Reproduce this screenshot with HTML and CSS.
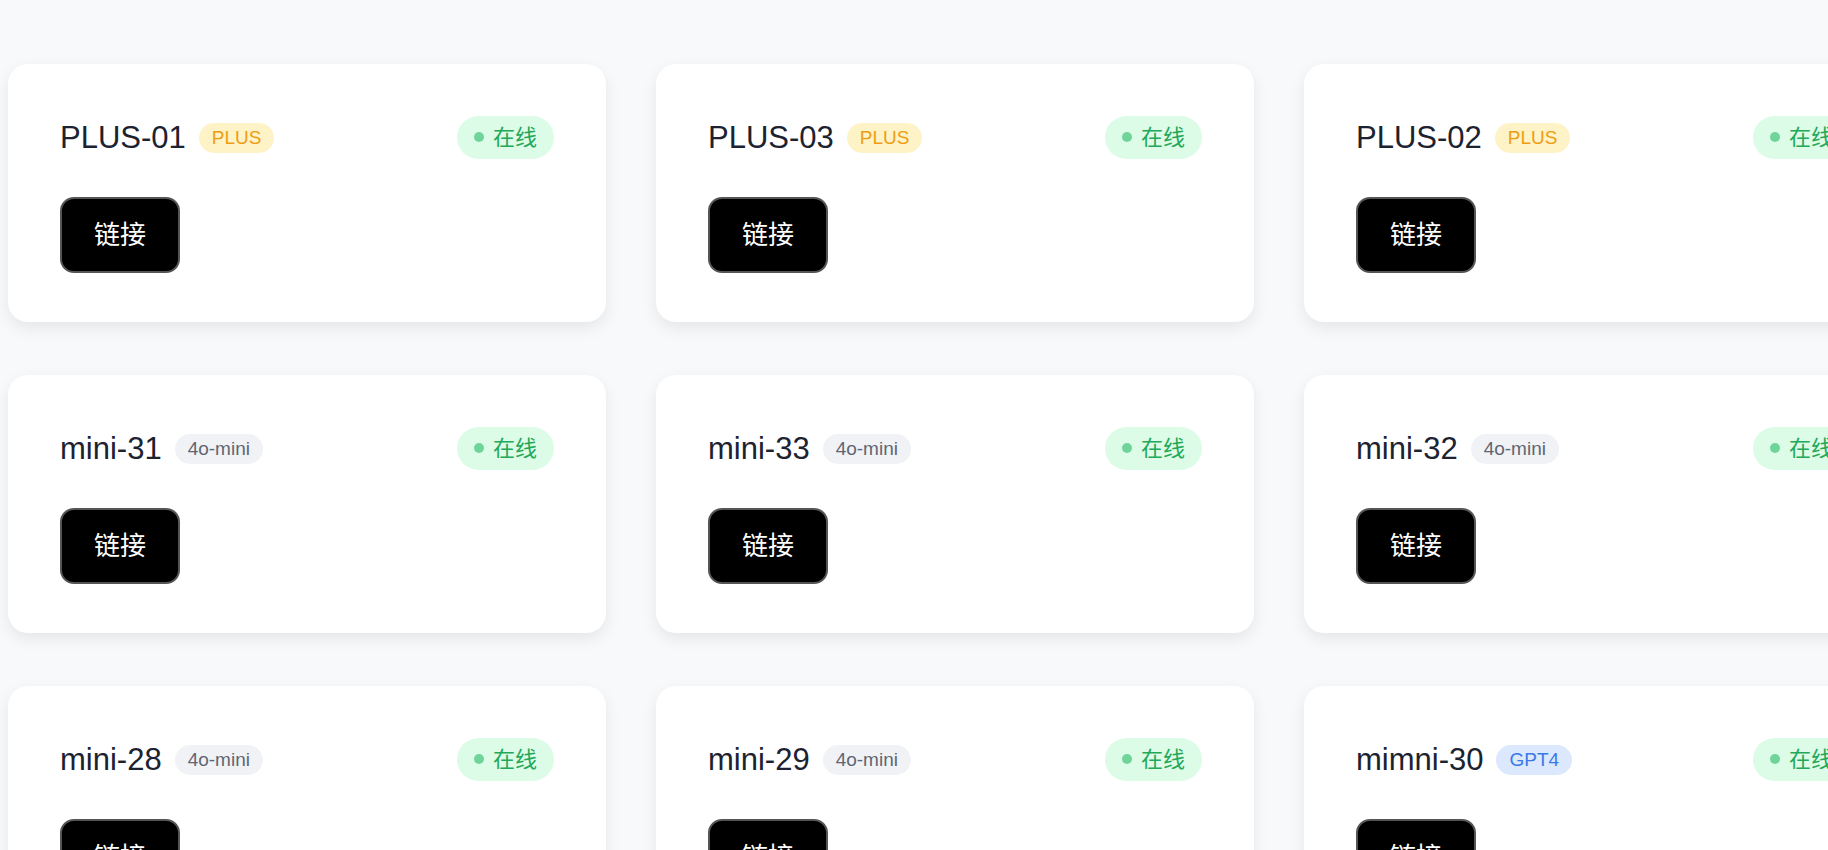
FILE: index.html
```html
<!DOCTYPE html>
<html lang="zh-CN">
<head>
  <meta charset="UTF-8">
  <meta name="viewport" content="width=device-width, initial-scale=1.0">
  <title>节点列表</title>
  <link rel="stylesheet" href="styles.css">
</head>
<body>

<div class="grid">
  <div class="card">
    <div class="card-head">
      <div class="name">PLUS-01 <span class="tag tag-plus">PLUS</span></div>
      <span class="status"><i class="dot"></i><span class="status-text">在线</span></span>
    </div>
    <button class="link-btn">链接</button>
  </div>
  <div class="card">
    <div class="card-head">
      <div class="name">PLUS-03 <span class="tag tag-plus">PLUS</span></div>
      <span class="status"><i class="dot"></i><span class="status-text">在线</span></span>
    </div>
    <button class="link-btn">链接</button>
  </div>
  <div class="card">
    <div class="card-head">
      <div class="name">PLUS-02 <span class="tag tag-plus">PLUS</span></div>
      <span class="status"><i class="dot"></i><span class="status-text">在线</span></span>
    </div>
    <button class="link-btn">链接</button>
  </div>

  <div class="card">
    <div class="card-head">
      <div class="name">mini-31 <span class="tag tag-mini">4o-mini</span></div>
      <span class="status"><i class="dot"></i><span class="status-text">在线</span></span>
    </div>
    <button class="link-btn">链接</button>
  </div>
  <div class="card">
    <div class="card-head">
      <div class="name">mini-33 <span class="tag tag-mini">4o-mini</span></div>
      <span class="status"><i class="dot"></i><span class="status-text">在线</span></span>
    </div>
    <button class="link-btn">链接</button>
  </div>
  <div class="card">
    <div class="card-head">
      <div class="name">mini-32 <span class="tag tag-mini">4o-mini</span></div>
      <span class="status"><i class="dot"></i><span class="status-text">在线</span></span>
    </div>
    <button class="link-btn">链接</button>
  </div>

  <div class="card">
    <div class="card-head">
      <div class="name">mini-28 <span class="tag tag-mini">4o-mini</span></div>
      <span class="status"><i class="dot"></i><span class="status-text">在线</span></span>
    </div>
    <button class="link-btn">链接</button>
  </div>
  <div class="card">
    <div class="card-head">
      <div class="name">mini-29 <span class="tag tag-mini">4o-mini</span></div>
      <span class="status"><i class="dot"></i><span class="status-text">在线</span></span>
    </div>
    <button class="link-btn">链接</button>
  </div>
  <div class="card">
    <div class="card-head">
      <div class="name">mimni-30 <span class="tag tag-gpt4">GPT4</span></div>
      <span class="status"><i class="dot"></i><span class="status-text">在线</span></span>
    </div>
    <button class="link-btn">链接</button>
  </div>
</div>

</body>
</html>
```

FILE: styles.css
```css
html, body {
  overflow: hidden;
}

body {
  font-family: "Liberation Sans", "Noto Sans CJK SC", sans-serif;
  background-color: #f8f9fb;
  margin: 0;
  padding: 64px 0 0 8px;
}

.grid {
  display: grid;
  grid-template-columns: repeat(3, 598px);
  gap: 53px 50px;
}

.card {
  background-color: #fff;
  border-radius: 20px;
  box-shadow: 0 6px 16px rgba(0, 0, 0, 0.08);
  padding: 52px 52px 49px;
}

.card-head {
  display: flex;
  justify-content: space-between;
  align-items: center;
  height: 43px;
  margin-bottom: 38px;
}

.name {
  display: flex;
  align-items: center;
  font-size: 31px;
  color: #1c2230;
  white-space: nowrap;
}

.tag {
  display: inline-flex;
  align-items: center;
  height: 30px;
  padding: 0 13px;
  margin-left: 13px;
  border-radius: 15px;
  font-size: 19px;
}

.tag-plus {
  background-color: #fef3c7;
  color: #ee9d12;
}

.tag-mini {
  background-color: #f1f2f5;
  color: #5f6672;
}

.tag-gpt4 {
  background-color: #dbe8fd;
  color: #3b78e7;
}

.status {
  display: inline-flex;
  align-items: center;
  gap: 9px;
  box-sizing: border-box;
  height: 43px;
  padding: 0 17px 2px;
  border-radius: 22px;
  background-color: #dcfce7;
  color: #22a85a;
  font-size: 22px;
  font-family: "Noto Sans CJK SC", sans-serif;
  white-space: nowrap;
}

.status-text {
  margin-bottom: 4px;
}

.dot {
  width: 10px;
  height: 10px;
  border-radius: 50%;
  background-color: #6fd49a;
}

.link-btn {
  display: block;
  box-sizing: border-box;
  height: 76px;
  padding: 0 32px 5px;
  background-color: #000;
  color: #fff;
  border: 2px solid #555;
  border-radius: 14px;
  font-family: "Noto Sans CJK SC", sans-serif;
  font-size: 26px;
  cursor: pointer;
}
```
